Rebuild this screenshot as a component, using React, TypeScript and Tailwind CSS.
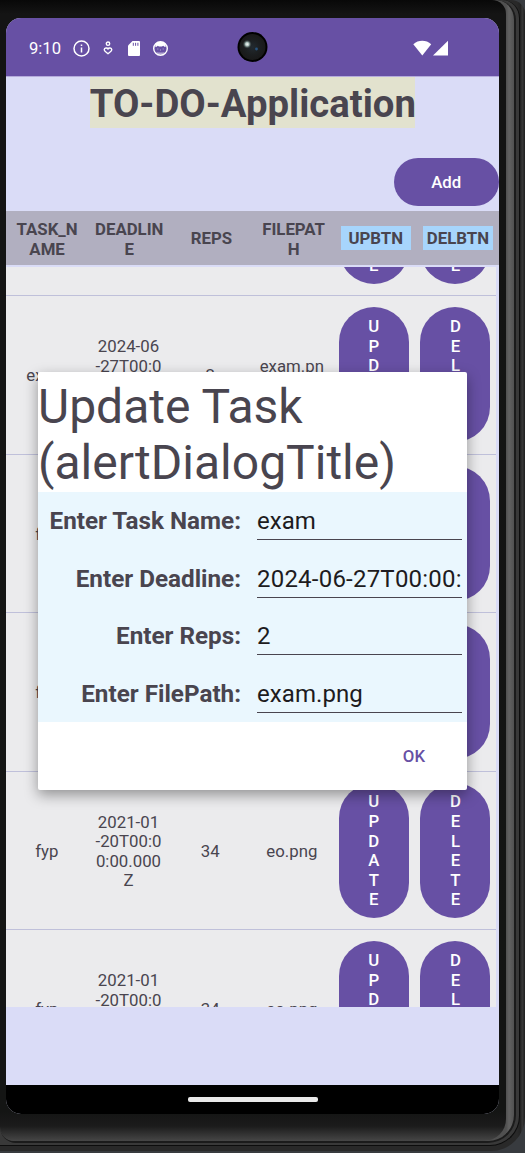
import React from "react";

type Task = { name: string; deadline: string[]; reps: string; file: string[] };

const TASKS: Task[] = [
  { name: "exam", deadline: ["2024-06", "-27T00:0", "0:00.000", "Z"], reps: "2", file: ["exam.pn", "g"] },
  { name: "exam", deadline: ["2024-06", "-27T00:0", "0:00.000", "Z"], reps: "2", file: ["exam.pn", "g"] },
  { name: "fyp", deadline: ["2021-01", "-20T00:0", "0:00.000", "Z"], reps: "34", file: ["eo.png"] },
  { name: "fyp", deadline: ["2021-01", "-20T00:0", "0:00.000", "Z"], reps: "34", file: ["eo.png"] },
  { name: "fyp", deadline: ["2021-01", "-20T00:0", "0:00.000", "Z"], reps: "34", file: ["eo.png"] },
  { name: "fyp", deadline: ["2021-01", "-20T00:0", "0:00.000", "Z"], reps: "34", file: ["eo.png"] },
];

const FIELDS = [
  { label: "Enter Task Name:", value: "exam", tracking: "" },
  { label: "Enter Deadline:", value: "2024-06-27T00:00:", tracking: "tracking-[0.22px]" },
  { label: "Enter Reps:", value: "2", tracking: "" },
  { label: "Enter FilePath:", value: "exam.png", tracking: "tracking-[0.08px]" },
];

function Lines({ lines }: { lines: string[] }) {
  return (
    <div className="flex flex-col items-center pt-[3px]">
      {lines.map((line, i) => (
        <span key={i} className="whitespace-nowrap">{line}</span>
      ))}
    </div>
  );
}

function PillButton({ label }: { label: string }) {
  return (
    <button className="ml-[0.6px] flex h-[134.6px] w-[70px] flex-col items-center justify-center rounded-[35px] bg-[#6750a4] pt-[2px] text-[16.8px] leading-[19.6px] font-medium text-white">
      {label.split("").map((c, i) => (
        <span key={i}>{c}</span>
      ))}
    </button>
  );
}

function TaskRow({ task }: { task: Task }) {
  return (
    <div className="grid h-[158.5px] w-[490px] shrink-0 grid-cols-6 place-items-center border-b border-[#bfc0da] bg-[#ebebed] text-[16.8px] leading-[19.6px] text-[#49454f]">
      <span className="pt-[3px]">{task.name}</span>
      <Lines lines={task.deadline} />
      <span className="pt-[3px]">{task.reps}</span>
      <Lines lines={task.file} />
      <PillButton label="UPDATE" />
      <PillButton label="DELETE" />
    </div>
  );
}

function StatusBar() {
  return (
    <div className="relative flex h-[59px] shrink-0 items-center border-b border-[#b5abdc] bg-[#6750a4] pt-[2px] pl-[23px] text-white">
      <span className="w-[33px] pt-px text-[16.6px] leading-5">9:10</span>
      <svg className="ml-[11px]" width="17" height="17" viewBox="0 0 17 17" fill="none" stroke="white" strokeWidth="1.5">
        <circle cx="8.5" cy="8.5" r="7.5" />
        <path d="M8.5 7.5v5M8.5 4.4v1.6" />
      </svg>
      <svg className="ml-[13px]" width="10" height="14" viewBox="0 0 10 14" fill="none" stroke="white" strokeWidth="1.4">
        <circle cx="5" cy="2.7" r="1.7" />
        <path d="M5 7.8C4.3 6.6 1.4 6.6 1.2 8.7 1.1 10 3.2 11.2 5 12.7c1.8-1.5 3.9-2.7 3.8-4C8.6 6.6 5.7 6.6 5 7.8Z" />
      </svg>
      <svg className="ml-[15px]" width="12" height="15" viewBox="0 0 12 15">
        <path fill="white" d="M4.5 0H11a1 1 0 0 1 1 1v13a1 1 0 0 1-1 1H1a1 1 0 0 1-1-1V4.5Z" />
        <path stroke="#6750a4" strokeWidth="1" d="M5.3 1.8v3M7.6 1.8v3M9.9 1.8v3" />
      </svg>
      <svg className="ml-[13px]" width="15" height="15" viewBox="0 0 15 15">
        <circle cx="7.5" cy="7.5" r="6.8" fill="none" stroke="white" strokeWidth="1.4" />
        <path fill="white" d="M2.4 3 4.5 1h6l2.1 2v3l-1.2-.3-1.2-1-1.2.8H6l-1.2-.8-1.2 1-1.2.3Z" />
        <path fill="white" fillOpacity=".5" d="M4.3 7.4h1v1h-1zM9.7 7.4h1v1h-1zM7 8.6h1v.8H7zM3.2 10.8l1.6.6h5.4l1.6-.6-1 1.7-1.5 1H5.7l-1.5-1Z" />
      </svg>
      <svg className="absolute top-[13px] left-[231px]" width="31" height="31" viewBox="0 0 31 31">
        <defs>
          <radialGradient id="lens">
            <stop offset="0" stopColor="#222a30" />
            <stop offset=".55" stopColor="#1c1f21" />
            <stop offset="1" stopColor="#191919" />
          </radialGradient>
          <radialGradient id="glint">
            <stop offset="0" stopColor="#ffffff" />
            <stop offset=".4" stopColor="#a9bfba" />
            <stop offset="1" stopColor="#2c3a3c" stopOpacity="0" />
          </radialGradient>
        </defs>
        <circle cx="15.5" cy="16" r="15" fill="#000" />
        <circle cx="15.5" cy="16" r="13" fill="url(#lens)" />
        <circle cx="10.2" cy="13.2" r="4.6" fill="url(#glint)" />
        <circle cx="19.5" cy="18" r="1.4" fill="#27537f" />
      </svg>
      <svg className="ml-[245px]" width="36" height="16" viewBox="0 0 36 16" fill="white">
        <path d="M9.3 15.5.3 4.2C5.4-.3 13.1-.3 18.2 4.2Z" />
        <path d="M35 .8V15.6H20Z" />
      </svg>
    </div>
  );
}

function UpdateDialog() {
  return (
    <div className="absolute top-[354px] left-8 flex h-[418px] w-[429px] flex-col rounded-[2px] bg-white shadow-[0_5px_14px_rgba(0,0,0,0.38)]">
      <h2 className="h-[120px] pt-[7px] text-[48px] leading-[56px] text-[#49454f]">
        Update Task
        <br />
        (alertDialogTitle)
      </h2>
      <div className="flex h-[230px] flex-col bg-[#eaf7fe]">
        {FIELDS.map((f) => (
          <div key={f.label} className="flex h-[57.6px] items-start">
            <div className="w-[203px] pt-[15px] text-right text-[24.25px] leading-7 font-bold whitespace-nowrap text-[#49454f]">{f.label}</div>
            <div className={`ml-4 h-[48px] w-[205.4px] overflow-hidden border-b border-[#49454f] pt-[15px] text-[24px] leading-7 whitespace-nowrap text-[#1d1b20] ${f.tracking}`}>{f.value}</div>
          </div>
        ))}
      </div>
      <div className="flex flex-1 items-center justify-end pr-[42px]">
        <button className="text-[16.8px] leading-5 font-medium text-[#6750a4]">OK</button>
      </div>
    </div>
  );
}

function Screen() {
  return (
    <div className="relative flex h-[1096px] w-[493px] flex-col overflow-hidden rounded-[15px] bg-[#dadcf7]">
      <StatusBar />
      <div className="flex h-[81px] shrink-0 items-start justify-center">
        <h1 className="h-[51px] w-[325.5px] bg-[#e2e2ce] text-center text-[38.3px] leading-[54px] font-bold whitespace-nowrap text-[#49454f]">TO-DO-Application</h1>
      </div>
      <div className="flex h-[53px] shrink-0 justify-end">
        <button className="h-12 w-[105.5px] rounded-full bg-[#6750a4] text-[16.8px] leading-5 font-medium text-white">Add</button>
      </div>
      <div className="grid h-[54px] shrink-0 grid-cols-6 place-items-center bg-[#b1afc0] text-[16.8px] leading-[19.6px] font-bold text-[#49454f]">
        <Lines lines={["TASK_N", "AME"]} />
        <Lines lines={["DEADLIN", "E"]} />
        <span className="pt-[2px]">REPS</span>
        <Lines lines={["FILEPAT", "H"]} />
        <span className="flex h-6 w-[70px] items-center justify-center bg-[#a7d5fc] pt-[2px]">UPBTN</span>
        <span className="flex h-6 w-[70px] items-center justify-center bg-[#a7d5fc] pt-[2px]">DELBTN</span>
      </div>
      <div className="mt-[2px] h-[740px] shrink-0 overflow-hidden">
        <div className="-mt-[129.5px] flex flex-col">
          {TASKS.map((task, i) => (
            <TaskRow key={i} task={task} />
          ))}
        </div>
      </div>
      <div className="mt-[78px] flex h-[29px] shrink-0 items-start justify-center bg-black pt-[12px]">
        <div className="h-[5px] w-[130px] rounded-[2px] bg-[#e9e9e9]" />
      </div>
      <UpdateDialog />
    </div>
  );
}

export default function App() {
  return (
    <div className="h-[1153px] w-[525px] overflow-hidden bg-[#383b3f] font-['Roboto',sans-serif]">
      <div className="h-[1151px] w-[525px] rounded-tr-[14px] rounded-br-[34px] bg-[linear-gradient(to_right,#292929_517px,#222_521px,#3a3a3a_522px,#1e1e1e_525px)] pb-[5px]">
        <div className="h-[1146px] w-[520px] rounded-tr-[18px] rounded-br-[30px] border-r border-b border-[#0d0d0d] bg-[#393939]">
          <div className="h-[1143px] w-[516px] rounded-tr-[20px] rounded-br-[28px] rounded-bl-[16px] border-r-2 border-b-2 border-[#1b1b1b] bg-[linear-gradient(to_right,#505050_506px,#626262_509px,#515151_514px)]">
            <div className="h-[1141px] w-[506px] rounded-tr-[14px] rounded-br-[22px] rounded-bl-[14px] bg-[linear-gradient(to_bottom,#080808,#141414_14px,#141514_1112px,#1b1b1b_1126px,#464646_1141px)] pt-[18px] pl-[6px]">
              <Screen />
            </div>
          </div>
        </div>
      </div>
    </div>
  );
}
